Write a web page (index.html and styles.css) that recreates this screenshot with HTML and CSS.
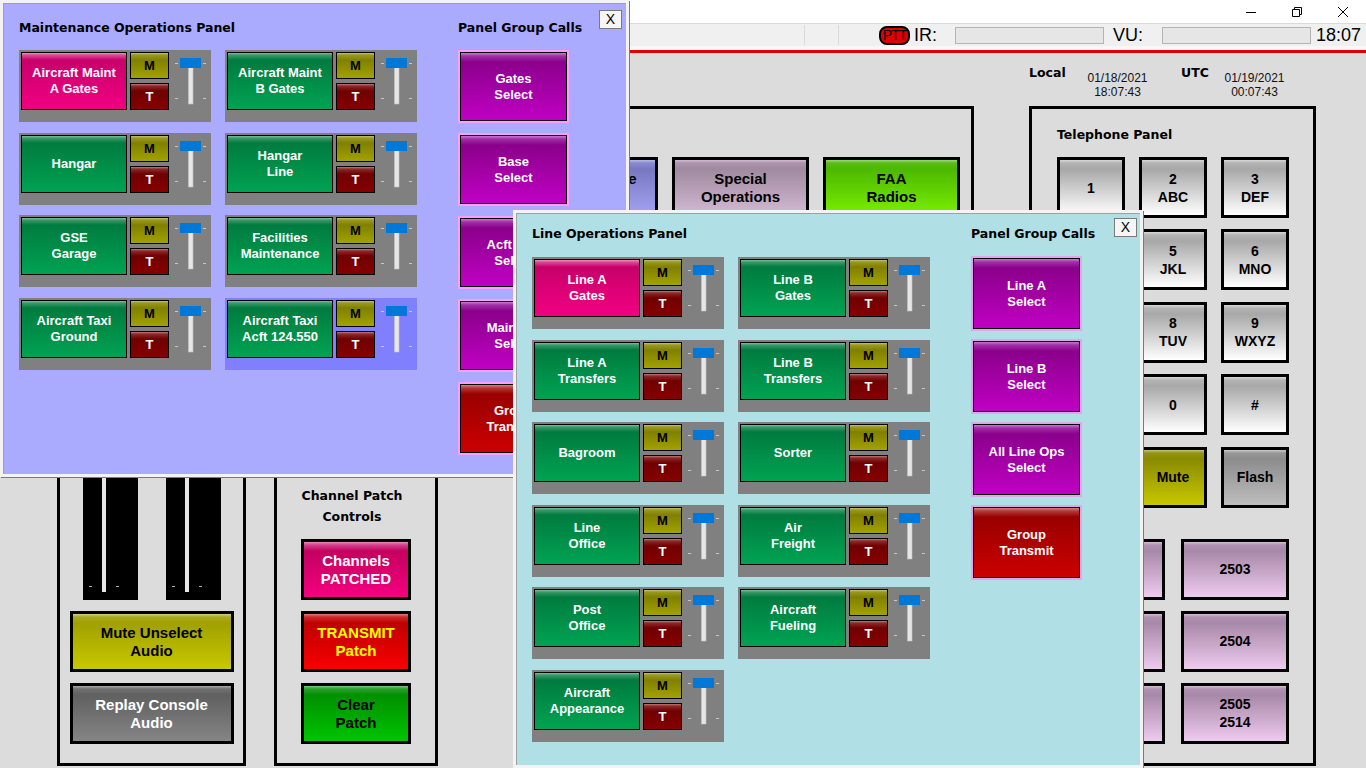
FILE: index.html
```html
<!DOCTYPE html>
<html lang="en">
<head>
<meta charset="utf-8">
<title>Operations Console</title>
<link rel="stylesheet" href="styles.css">
</head>
<body>
<svg class="defs" xmlns="http://www.w3.org/2000/svg">
  <symbol id="slider" viewBox="0 0 42 60">
    <rect x="6" y="13" width="3" height="1" fill="#c8c8c8"/>
    <rect x="34" y="13" width="3" height="1" fill="#c8c8c8"/>
    <rect x="6" y="48" width="3" height="1" fill="#c8c8c8"/>
    <rect x="34" y="48" width="3" height="1" fill="#c8c8c8"/>
    <rect x="19.5" y="9" width="4.5" height="45" fill="#e6e6e6" stroke="#c4c4c4" stroke-width="0.6"/>
    <rect x="11" y="8" width="21" height="10" fill="#0078d7"/>
  </symbol>
  <symbol id="vmeter" viewBox="0 0 55 130">
    <rect width="55" height="130" fill="#000"/>
    <rect x="19" y="0" width="4" height="122" fill="#e6e6e6"/>
    <rect x="6" y="116" width="3" height="1" fill="#b0b0b0"/>
    <rect x="33" y="116" width="3" height="1" fill="#b0b0b0"/>
  </symbol>
</svg>

<div class="app">
  <div class="titlebar">
    <div class="winctl"><svg width="10" height="10" viewBox="0 0 10 10"><path d="M0 5.5H10" stroke="#000" stroke-width="1"/></svg></div>
    <div class="winctl"><svg width="10" height="10" viewBox="0 0 10 10"><path d="M0.5 2.5h7v7h-7z M2.5 2.5V0.5h7v7h-2" fill="none" stroke="#000" stroke-width="1"/></svg></div>
    <div class="winctl"><svg width="10" height="10" viewBox="0 0 10 10"><path d="M0 0L10 10M10 0L0 10" stroke="#000" stroke-width="1"/></svg></div>
  </div>
  <div class="toolbar">
    <span class="sep first"></span>
    <span class="sep sep2"></span>
    <span class="ptt">PTT</span>
    <span class="tlabel ir">IR:</span>
    <span class="meter"></span>
    <span class="tlabel vu">VU:</span>
    <span class="meter"></span>
    <span class="ctime">18:07</span>
  </div>
  <div class="strip"></div>
  <div class="redline"></div>

  <main class="console">
    <section class="box box-audio">
      <div class="meters">
        <svg class="vmeter"><use href="#vmeter"/></svg>
        <svg class="vmeter"><use href="#vmeter"/></svg>
      </div>
      <div class="cbtn audio-btn c-yellow">Mute Unselect<br>Audio</div>
      <div class="cbtn audio-btn c-gray">Replay Console<br>Audio</div>
    </section>

    <section class="box box-patch">
      <div class="patch-title">Channel Patch<br>Controls</div>
      <div class="cbtn patch-btn c-pink">Channels<br>PATCHED</div>
      <div class="cbtn patch-btn c-red">TRANSMIT<br>Patch</div>
      <div class="cbtn patch-btn c-green">Clear<br>Patch</div>
    </section>

    <section class="box box-pages">
      <div class="pages">
        <div class="cbtn page-btn c-blue">Ground Base<br>Ops</div>
        <div class="cbtn page-btn c-mauve">Special<br>Operations</div>
        <div class="cbtn page-btn c-lime">FAA<br>Radios</div>
      </div>
    </section>

    <div class="rightcol">
      <div class="clock">
        <div class="clk-lbl clk-local">Local</div>
        <div class="clk-val clk-val1">01/18/2021<br>18:07:43</div>
        <div class="clk-lbl clk-utc">UTC</div>
        <div class="clk-val clk-val2">01/19/2021<br>00:07:43</div>
      </div>
      <section class="box box-phone">
        <div class="phone-hdr">Telephone Panel</div>
        <div class="keypad">
          <div class="cbtn key">1</div>
          <div class="cbtn key">2<br>ABC</div>
          <div class="cbtn key">3<br>DEF</div>
          <div class="cbtn key">4<br>GHI</div>
          <div class="cbtn key">5<br>JKL</div>
          <div class="cbtn key">6<br>MNO</div>
          <div class="cbtn key">7<br>PQRS</div>
          <div class="cbtn key">8<br>TUV</div>
          <div class="cbtn key">9<br>WXYZ</div>
          <div class="cbtn key">*</div>
          <div class="cbtn key">0</div>
          <div class="cbtn key">#</div>
          <div class="cbtn key k-flash">Hold</div>
          <div class="cbtn key k-mute">Mute</div>
          <div class="cbtn key k-flash">Flash</div>
        </div>
        <div class="lines">
          <div class="cbtn key k-line">2500</div>
          <div class="cbtn key k-line">2503</div>
          <div class="cbtn key k-line">2501</div>
          <div class="cbtn key k-line">2504</div>
          <div class="cbtn key k-line">2502</div>
          <div class="cbtn key k-line">2505<br>2514</div>
        </div>
      </section>
    </div>
  </main>
</div>

<section class="win win-maint">
  <div class="closebtn">X</div>
  <div class="win-body">
    <div class="chan-col">
      <h2 class="whdr">Maintenance Operations Panel</h2>
      <div class="chan-grid">
        <div class="ch"><div class="chb pink">Aircraft Maint<br>A Gates</div><div class="mt"><div class="m">M</div><div class="t">T</div></div><svg class="sl"><use href="#slider"/></svg></div>
        <div class="ch"><div class="chb green">Aircraft Maint<br>B Gates</div><div class="mt"><div class="m">M</div><div class="t">T</div></div><svg class="sl"><use href="#slider"/></svg></div>
        <div class="ch"><div class="chb green">Hangar</div><div class="mt"><div class="m">M</div><div class="t">T</div></div><svg class="sl"><use href="#slider"/></svg></div>
        <div class="ch"><div class="chb green">Hangar<br>Line</div><div class="mt"><div class="m">M</div><div class="t">T</div></div><svg class="sl"><use href="#slider"/></svg></div>
        <div class="ch"><div class="chb green">GSE<br>Garage</div><div class="mt"><div class="m">M</div><div class="t">T</div></div><svg class="sl"><use href="#slider"/></svg></div>
        <div class="ch"><div class="chb green">Facilities<br>Maintenance</div><div class="mt"><div class="m">M</div><div class="t">T</div></div><svg class="sl"><use href="#slider"/></svg></div>
        <div class="ch"><div class="chb green">Aircraft Taxi<br>Ground</div><div class="mt"><div class="m">M</div><div class="t">T</div></div><svg class="sl"><use href="#slider"/></svg></div>
        <div class="ch hl"><div class="chb green">Aircraft Taxi<br>Acft 124.550</div><div class="mt"><div class="m">M</div><div class="t">T</div></div><svg class="sl"><use href="#slider"/></svg></div>
      </div>
    </div>
    <div class="grp-col">
      <h2 class="whdr">Panel Group Calls</h2>
      <div class="grp-list">
        <div class="gbtn g-purple">Gates<br>Select</div>
        <div class="gbtn g-purple">Base<br>Select</div>
        <div class="gbtn g-purple">Acft Taxi<br>Select</div>
        <div class="gbtn g-purple">Maint All<br>Select</div>
        <div class="gbtn g-red">Group<br>Transmit</div>
      </div>
    </div>
  </div>
</section>

<section class="win win-line">
  <div class="closebtn">X</div>
  <div class="win-body">
    <div class="chan-col">
      <h2 class="whdr">Line Operations Panel</h2>
      <div class="chan-grid">
        <div class="ch"><div class="chb pink">Line A<br>Gates</div><div class="mt"><div class="m">M</div><div class="t">T</div></div><svg class="sl"><use href="#slider"/></svg></div>
        <div class="ch"><div class="chb green">Line B<br>Gates</div><div class="mt"><div class="m">M</div><div class="t">T</div></div><svg class="sl"><use href="#slider"/></svg></div>
        <div class="ch"><div class="chb green">Line A<br>Transfers</div><div class="mt"><div class="m">M</div><div class="t">T</div></div><svg class="sl"><use href="#slider"/></svg></div>
        <div class="ch"><div class="chb green">Line B<br>Transfers</div><div class="mt"><div class="m">M</div><div class="t">T</div></div><svg class="sl"><use href="#slider"/></svg></div>
        <div class="ch"><div class="chb green">Bagroom</div><div class="mt"><div class="m">M</div><div class="t">T</div></div><svg class="sl"><use href="#slider"/></svg></div>
        <div class="ch"><div class="chb green">Sorter</div><div class="mt"><div class="m">M</div><div class="t">T</div></div><svg class="sl"><use href="#slider"/></svg></div>
        <div class="ch"><div class="chb green">Line<br>Office</div><div class="mt"><div class="m">M</div><div class="t">T</div></div><svg class="sl"><use href="#slider"/></svg></div>
        <div class="ch"><div class="chb green">Air<br>Freight</div><div class="mt"><div class="m">M</div><div class="t">T</div></div><svg class="sl"><use href="#slider"/></svg></div>
        <div class="ch"><div class="chb green">Post<br>Office</div><div class="mt"><div class="m">M</div><div class="t">T</div></div><svg class="sl"><use href="#slider"/></svg></div>
        <div class="ch"><div class="chb green">Aircraft<br>Fueling</div><div class="mt"><div class="m">M</div><div class="t">T</div></div><svg class="sl"><use href="#slider"/></svg></div>
        <div class="ch"><div class="chb green">Aircraft<br>Appearance</div><div class="mt"><div class="m">M</div><div class="t">T</div></div><svg class="sl"><use href="#slider"/></svg></div>
      </div>
    </div>
    <div class="grp-col">
      <h2 class="whdr">Panel Group Calls</h2>
      <div class="grp-list">
        <div class="gbtn g-purple">Line A<br>Select</div>
        <div class="gbtn g-purple">Line B<br>Select</div>
        <div class="gbtn g-purple">All Line Ops<br>Select</div>
        <div class="gbtn g-red">Group<br>Transmit</div>
      </div>
    </div>
  </div>
</section>
</body>
</html>
```

FILE: styles.css
```css
* { box-sizing: border-box; }
html, body { margin: 0; padding: 0; }
body {
  width: 1366px;
  height: 768px;
  overflow: hidden;
  position: relative;
  background: #dcdcdc;
  font-family: "Liberation Sans", Arial, sans-serif;
  color: #000;
}
.defs { position: absolute; width: 0; height: 0; overflow: hidden; }

/* ---------- title + toolbar ---------- */
.titlebar { height: 23px; background: #fff; display: flex; justify-content: flex-end; }
.winctl { width: 46px; height: 23px; display: flex; align-items: center; justify-content: center; }
.winctl svg { display: block; }

.toolbar {
  height: 23px;
  background: #f0f0f0;
  border-top: 1px solid #dadada;
  display: flex;
  align-items: center;
  padding-right: 5px;
}
.sep { width: 1px; height: 20px; background: #dadada; }
.sep.first { margin-left: auto; }
.sep2 { margin-left: 33px; }
.ptt {
  margin-left: 40px;
  width: 31px;
  height: 19px;
  background: #e00000;
  border: 2px solid #000;
  border-radius: 8px;
  font-size: 14px;
  line-height: 15px;
  text-align: center;
  letter-spacing: -1px;
}
.tlabel { font-size: 18px; line-height: 20px; }
.ir { margin-left: 4px; width: 41px; }
.vu { margin-left: 9px; width: 49px; }
.meter { width: 149px; height: 17px; background: #e6e6e6; border: 1px solid #b4b4b4; }
.ctime { margin-left: 5px; width: 45px; font-size: 18px; line-height: 20px; }
.strip { height: 4px; background: #f7f7f7; }
.redline { height: 3px; background: #e00000; }

/* ---------- console ---------- */
.console { display: flex; align-items: flex-start; height: 715px; padding-left: 57px; }
.box { border: 3px solid #000; }

.cbtn {
  border: 3px solid #000;
  display: flex;
  align-items: center;
  justify-content: center;
  text-align: center;
  font-weight: bold;
  font-size: 15px;
  line-height: 18px;
  color: #fff;
}

.box-audio, .box-patch {
  height: 466px;
  margin-top: 247px;
  display: flex;
  flex-direction: column;
  align-items: center;
  justify-content: flex-end;
  padding-bottom: 19px;
}
.box-audio { width: 189px; }
.box-patch { width: 164px; margin-left: 28px; }
.meters { display: flex; gap: 28px; margin-bottom: 11px; }
.vmeter { display: block; width: 55px; height: 130px; }
.audio-btn { width: 164px; height: 61px; }
.audio-btn + .audio-btn { margin-top: 11px; }

.patch-title {
  font: bold 12.5px/21px "DejaVu Sans", sans-serif;
  text-align: center;
  padding-right: 8px;
  margin-bottom: 12.5px;
}
.patch-btn { width: 110px; height: 61px; }
.patch-btn + .patch-btn { margin-top: 11px; }

.box-pages {
  width: 504px;
  height: 355px;
  margin-top: 53px;
  margin-left: 32px;
  padding: 48px 0 0 48px;
}
.pages { display: flex; gap: 14px; }
.page-btn { width: 137px; height: 62px; }

.rightcol { margin-left: 55px; width: 287px; }
.clock { height: 53px; padding-top: 12px; display: flex; align-items: flex-start; }
.clk-lbl { font: bold 12.5px/16px "DejaVu Sans", sans-serif; }
.clk-local { width: 53px; }
.clk-utc { width: 67px; padding-left: 28px; }
.clk-val { font-size: 12px; line-height: 14px; text-align: center; margin-top: 6.4px; color: #111; }
.clk-val1 { width: 71px; }
.clk-val2 { width: 69px; }

.box-phone { height: 660px; padding: 18px 0 0 25px; }
.phone-hdr { font: bold 12.5px/16px "DejaVu Sans", sans-serif; }
.keypad {
  margin-top: 14px;
  display: grid;
  grid-template-columns: repeat(3, 68px);
  grid-template-rows: repeat(5, 61px);
  column-gap: 14px;
  row-gap: 11.4px;
}
.lines {
  margin-top: 31.4px;
  display: grid;
  grid-template-columns: 108px 108px;
  grid-auto-rows: 61px;
  column-gap: 16px;
  row-gap: 11px;
}
.key { font-size: 14px; color: #000; background: linear-gradient(#d8d8d8 0, #b4b4b4 3px, #a8a8a8 9px, #ffffff 100%); }

/* button colours */
.c-yellow { color: #000; background: linear-gradient(#d0d080 0, #aaaa22 3px, #a0a000 9px, #c8c800 100%); }
.c-gray   { background: linear-gradient(#a8a8a8 0, #707070 3px, #606060 9px, #858585 100%); }
.c-pink   { background: linear-gradient(#ec88bc 0, #d2408c 3px, #c4005f 9px, #f5007f 100%); }
.c-red    { color: #ffff00; background: linear-gradient(#e87878 0, #cc2a2a 3px, #c00000 9px, #f80000 100%); }
.c-green  { color: #000; background: linear-gradient(#78c878 0, #2aa02a 3px, #009000 9px, #00c400 100%); }
.c-blue   { color: #000; background: linear-gradient(#b8b8e8 0, #8a8ad0 3px, #7878c0 9px, #a4a4f4 100%); }
.c-mauve  { color: #000; background: linear-gradient(#d0bcd0 0, #ae94ae 3px, #a08aa0 9px, #d4bcd4 100%); }
.c-lime   { color: #000; background: linear-gradient(#98dc78 0, #5cbc18 3px, #4cb800 9px, #7cf000 100%); }
.k-mute   { background: linear-gradient(#c8c878 0, #949418 3px, #8a8a00 9px, #c8c800 100%); }
.k-flash  { background: linear-gradient(#cacaca 0, #989898 3px, #8c8c8c 9px, #bebebe 100%); }
.k-line   { background: linear-gradient(#d4bcd4 0, #b090b0 3px, #a888a8 9px, #eecaee 100%); }

/* ---------- floating panel windows ---------- */
.win {
  position: absolute;
  border: 3px solid #f3f3f3;
  box-shadow: 1px 1px 0 #7a7a7a, inset 1px 1px 0 #a0a0a0;
  overflow: hidden;
}
.win-maint { left: 0; top: 0; width: 629px; height: 477px; background: #aaaaff; }
.win-line { left: 513px; top: 210px; width: 630px; height: 558px; background: #b0e0e6; }

.closebtn {
  position: absolute;
  top: 7px;
  right: 4px;
  width: 23px;
  height: 19px;
  border: 1px solid #7a7a7a;
  background: #f6f6f6;
  font-size: 14px;
  line-height: 17px;
  text-align: center;
}
.win-line .closebtn { top: 5px; right: 3px; }

.win-body { display: flex; align-items: flex-start; padding: 17px 0 0 16px; }
.win-line .win-body { padding-top: 13px; }
.whdr { margin: 0; font: bold 12.5px/16px "DejaVu Sans", sans-serif; white-space: nowrap; }

.chan-col { width: 398px; }
.chan-grid {
  margin-top: 14px;
  display: grid;
  grid-template-columns: 192px 192px;
  column-gap: 14px;
  row-gap: 10.6px;
}
.win-line .chan-grid { margin-top: 15px; }

.ch {
  display: flex;
  align-items: flex-start;
  width: 192px;
  height: 72px;
  padding: 2px 0 0 2px;
  background: #808080;
}
.ch.hl { background: #8080ff; }
.chb {
  width: 106px;
  height: 58px;
  border: 1px solid #000;
  display: flex;
  align-items: center;
  justify-content: center;
  text-align: center;
  color: #fff;
  font-weight: bold;
  font-size: 13px;
  line-height: 16px;
}
.chb.pink  { background: linear-gradient(#ef92c2 0, #dc4c98 2px, #c8006a 7px, #f20082 100%); }
.chb.green { background: linear-gradient(#7ec09e 0, #3c9a6a 2px, #007b3f 7px, #00a352 100%); }
.mt { margin-left: 3px; display: flex; flex-direction: column; gap: 4px; }
.m, .t {
  width: 39px;
  height: 27px;
  border: 1px solid #000;
  display: flex;
  align-items: center;
  justify-content: center;
  font-weight: bold;
  font-size: 13px;
  line-height: 1;
}
.m { color: #000; background: linear-gradient(#c4c470 0, #999922 2px, #808000 7px, #a2a200 100%); }
.t { color: #fff; background: linear-gradient(#c27a7a 0, #8c2a2a 2px, #700000 7px, #860000 100%); }
.sl { display: block; width: 42px; height: 60px; margin-top: -2px; }

.grp-col { margin-left: 41px; }
.grp-list { margin-top: 16px; padding-left: 2px; display: flex; flex-direction: column; gap: 14px; }
.win-line .grp-list { margin-top: 16px; gap: 12px; }
.gbtn {
  width: 107px;
  height: 69px;
  border: 1px solid #000;
  box-shadow: 0 0 0 2px #ff9cff;
  display: flex;
  align-items: center;
  justify-content: center;
  text-align: center;
  color: #fff;
  font-weight: bold;
  font-size: 13px;
  line-height: 16px;
}
.win-line .gbtn { height: 71px; box-shadow: 0 0 0 2px #dfa6ec; }
.g-purple { background: linear-gradient(#c878d0 0, #a030a8 3px, #8b008b 9px, #c000c4 100%); }
.g-red    { background: linear-gradient(#d88080 0, #b33a3a 3px, #990000 9px, #cc0000 100%); }
```
